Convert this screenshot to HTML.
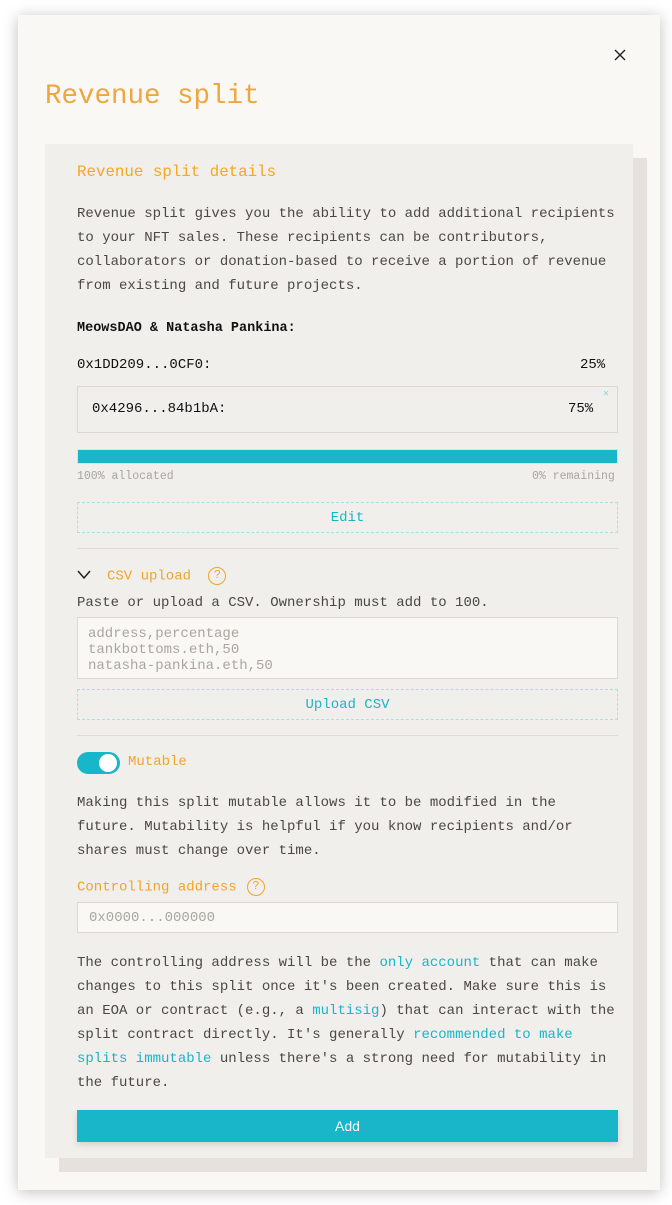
<!DOCTYPE html>
<html><head><style>
*{margin:0;padding:0;box-sizing:border-box}
body{width:672px;height:1205px;background:#fff;font-family:"Liberation Mono",monospace;position:relative;overflow:hidden}
.a{position:absolute;white-space:nowrap}
.modal{position:absolute;left:18px;top:15px;width:642px;height:1175px;background:#f9f8f5;box-shadow:0 2px 14px rgba(0,0,0,.25)}
.shadow{position:absolute;left:59px;top:158px;width:588px;height:1014px;background:#e6e1dc}
.card{position:absolute;left:45px;top:144px;width:588px;height:1014px;background:#f1efeb}
.t{font-size:14px;color:#4a4744;line-height:24px}
.o{color:#f0a42b}
.k{color:#19b5c8}
.btn{position:absolute;left:77px;width:541px;border:1px dashed #a9dfe6;color:#19b5c8;font-size:14px;text-align:center}
.hr{position:absolute;left:77px;width:541px;height:1px;background:#dfdbd6}
.q{display:inline-block;width:18px;height:18px;border:1.5px solid #f0a42b;border-radius:50%;font-size:12px;line-height:15px;text-align:center;color:#f0a42b;vertical-align:middle}
</style></head><body>
<div class="modal"></div>
<svg class="a" style="left:614px;top:49px" width="12" height="12" viewBox="0 0 12 12"><path d="M1 1L11 11M11 1L1 11" stroke="#222" stroke-width="1.4"/></svg>
<div class="a o" style="left:45px;top:81px;font-size:27.5px;color:#eea63f">Revenue split</div>
<div class="shadow"></div>
<div class="card"></div>
<div class="a o" style="left:77px;top:163px;font-size:15.8px;color:#f5a623">Revenue split details</div>
<div class="a t" style="left:77px;top:202px">Revenue split gives you the ability to add additional recipients<br>to your NFT sales. These recipients can be contributors,<br>collaborators or donation-based to receive a portion of revenue<br>from existing and future projects.</div>
<div class="a" style="left:77px;top:321px;font-size:13.5px;font-weight:bold;color:#111">MeowsDAO &amp; Natasha Pankina:</div>
<div class="a" style="left:77px;top:357px;font-size:14px;color:#111">0x1DD209...0CF0:</div>
<div class="a" style="left:580px;top:357px;font-size:14px;color:#111">25%</div>
<div class="a" style="left:77px;top:386px;width:541px;height:47px;border:1px solid #dcd8d3"></div>
<div class="a" style="left:92px;top:401px;font-size:14px;color:#111">0x4296...84b1bA:</div>
<div class="a" style="left:568px;top:401px;font-size:14px;color:#111">75%</div>
<div class="a k" style="left:603px;top:388px;font-size:10px;color:#8fd3dc">✕</div>
<div class="a" style="left:77px;top:449px;width:541px;height:15px;background:#19b5c8;border:1px solid #cfe6ea"></div>
<div class="a" style="left:77px;top:470px;font-size:11.5px;color:#a8a49f">100% allocated</div>
<div class="a" style="left:532px;top:470px;font-size:11.5px;color:#a8a49f">0% remaining</div>
<div class="btn" style="top:502px;height:31px;line-height:30px">Edit</div>
<div class="hr" style="top:548px"></div>
<svg class="a" style="left:77px;top:569px" width="14" height="12" viewBox="0 0 14 12"><path d="M1 2 L7 9 L13 2" fill="none" stroke="#222" stroke-width="1.5"/></svg>
<div class="a o" style="left:107px;top:567px;font-size:14px;line-height:18px">CSV upload <span class="q" style="margin-left:9px">?</span></div>
<div class="a t" style="left:77px;top:591px">Paste or upload a CSV. Ownership must add to 100.</div>
<div class="a" style="left:77px;top:617px;width:541px;height:62px;border:1px solid #dcd8d3;background:#f9f8f5"></div>
<div class="a" style="left:88px;top:626px;font-size:14px;line-height:16px;color:#aaa59f">address,percentage<br>tankbottoms.eth,50<br>natasha-pankina.eth,50</div>
<div class="btn" style="top:689px;height:31px;line-height:30px">Upload CSV</div>
<div class="hr" style="top:735px"></div>
<div class="a" style="left:77px;top:752px;width:43px;height:22px;border-radius:11px;background:#19b5c8"></div>
<div class="a" style="left:99px;top:754px;width:18px;height:18px;border-radius:50%;background:#fff"></div>
<div class="a o" style="left:128px;top:754px;font-size:14px">Mutable</div>
<div class="a t" style="left:77px;top:791px">Making this split mutable allows it to be modified in the<br>future. Mutability is helpful if you know recipients and/or<br>shares must change over time.</div>
<div class="a o" style="left:77px;top:878px;font-size:14px;line-height:18px">Controlling address <span class="q" style="margin-left:2px">?</span></div>
<div class="a" style="left:77px;top:902px;width:541px;height:31px;border:1px solid #dcd8d3;background:#f9f8f5;font-size:14px;color:#aaa59f;padding:7px 11px">0x0000...000000</div>
<div class="a t" style="left:77px;top:951px">The controlling address will be the <span class="k">only account</span> that can make<br>changes to this split once it's been created. Make sure this is<br>an EOA or contract (e.g., a <span class="k">multisig</span>) that can interact with the<br>split contract directly. It's generally <span class="k">recommended to make</span><br><span class="k">splits immutable</span> unless there's a strong need for mutability in<br>the future.</div>
<div class="a" style="left:77px;top:1110px;width:541px;height:32px;background:#19b5c8;color:#fff;font-size:14px;text-align:center;line-height:32px;box-shadow:0 3px 6px rgba(0,0,0,.12);font-family:'Liberation Sans',sans-serif">Add</div>
</body></html>
